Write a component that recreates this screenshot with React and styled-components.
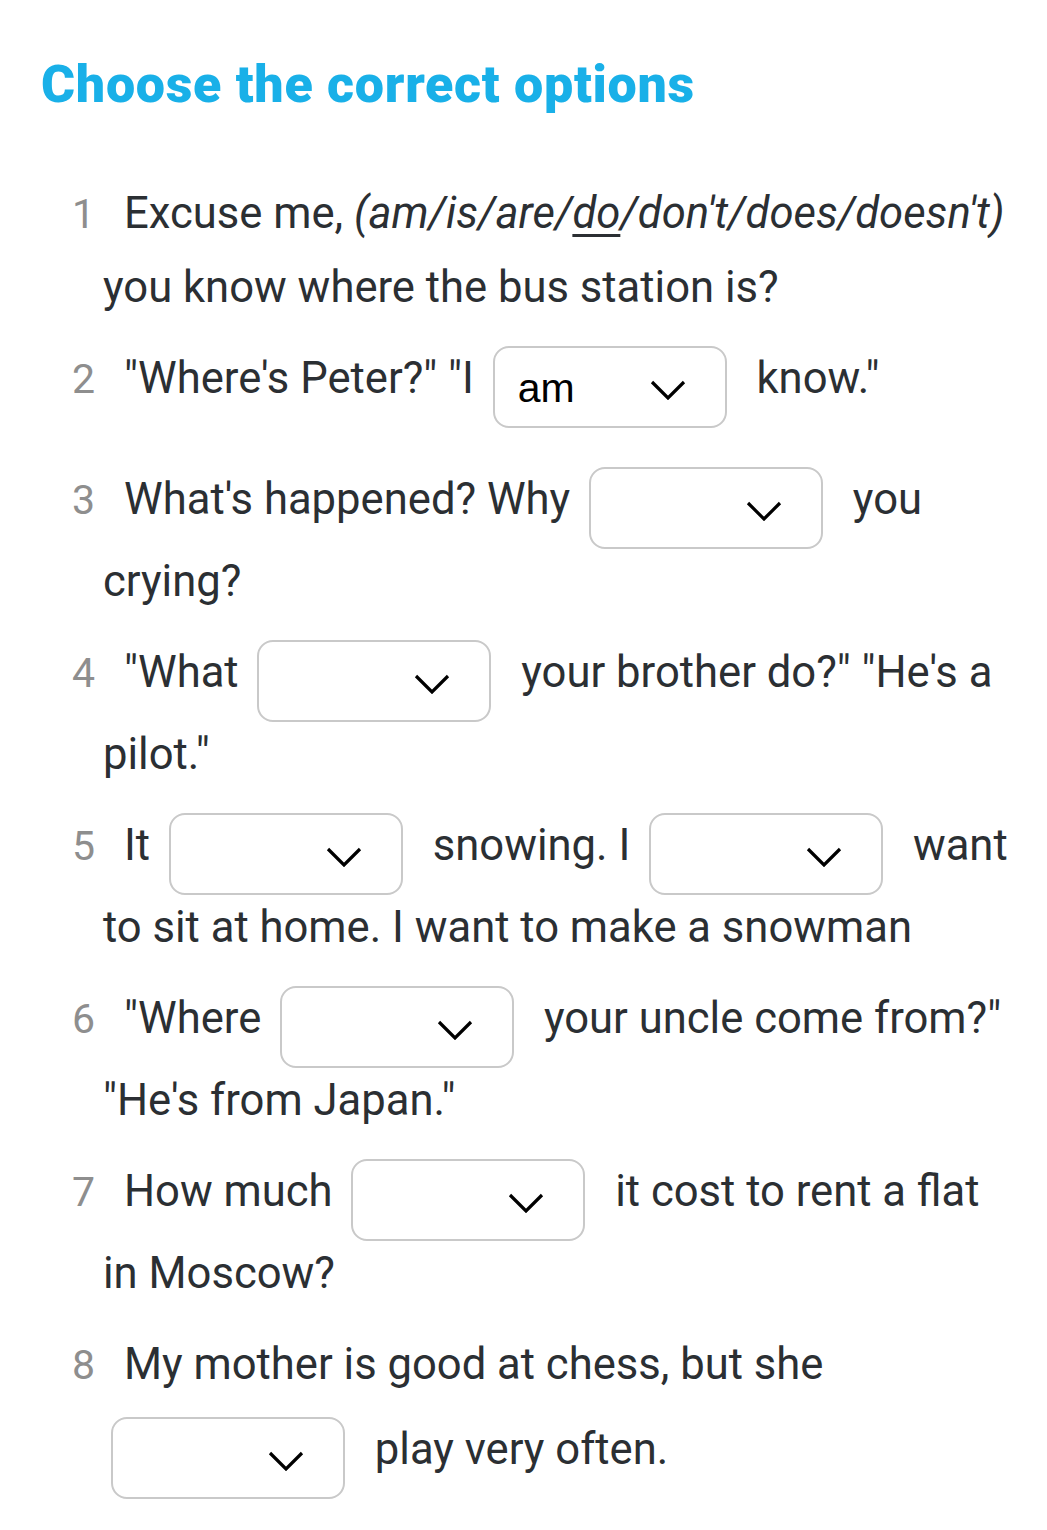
import React from 'react';
import styled, { createGlobalStyle } from 'styled-components';

const Global = createGlobalStyle`
  html, body { margin: 0; padding: 0; background: #ffffff; }
  body { font-family: Roboto, "Noto Sans", Arial, sans-serif; }
`;

const Page = styled.main`
  box-sizing: border-box;
  width: 1047px;
  min-height: 1530px;
  padding: 55px 35px 30px 39px;
`;

const Title = styled.h1`
  margin: 0 0 62px;
  padding-left: 2px;
  font-family: Roboto, "Noto Sans", sans-serif;
  font-weight: 900;
  font-size: 52px;
  line-height: 60px;
  color: #19b0e8;
  letter-spacing: 0.7px;
`;

const List = styled.ol`
  list-style: none;
  margin: 0;
  padding: 0 0 0 64px;
`;

const Item = styled.li`
  font-family: Roboto, "Noto Sans", sans-serif;
  font-size: 43.6px;
  line-height: 73px;
  color: #2b2f33;
  text-indent: -31px;
  margin-bottom: ${(p) => (p.$after ?? 7)}px;
`;

const Num = styled.span`
  display: inline-block;
  width: 20px;
  margin-right: 32px;
  text-indent: 0;
  text-align: right;
  color: #8e8e8e;
  font-size: 41px;
`;

const Options = styled.em`
  font-style: italic;
`;

const Marked = styled.span`
  text-decoration: underline;
  text-decoration-thickness: 3px;
  text-underline-offset: 6px;
`;

const SelectBox = styled.span`
  display: inline-block;
  box-sizing: border-box;
  width: 234px;
  height: 82px;
  margin: 15px 19px -4px 8px;
  vertical-align: -31px;
  overflow: hidden;
  text-indent: 0;
  border: 2px solid #c9c9c9;
  border-radius: 16px;
  background: #ffffff;
`;

const SelectInner = styled.span`
  display: flex;
  align-items: center;
  justify-content: space-between;
  height: 100%;
  padding: 0 39px 0 23px;
  box-sizing: border-box;
`;

const Value = styled.span`
  font-family: "Liberation Sans", Arial, sans-serif;
  font-size: 41px;
  line-height: 1;
  color: #000000;
  margin-top: 2px;
`;

const Chevron = styled.svg`
  display: block;
  flex: none;
  margin-top: 6px;
`;

function Select({ value = '' }) {
  return (
    <SelectBox role="combobox" aria-expanded="false">
      <SelectInner>
        <Value>{value}</Value>
        <Chevron width="36" height="20" viewBox="0 0 36 20" aria-hidden="true">
          <polyline points="2,2 18,18 34,2" fill="none" stroke="#000" strokeWidth="3.2" />
        </Chevron>
      </SelectInner>
    </SelectBox>
  );
}

export default function App() {
  return (
    <>
      <Global />
      <Page>
        <Title>Choose the correct options</Title>
        <List>
          <Item>
            <Num>1</Num>Excuse me, <Options>(am/is/are/<Marked>do</Marked>/don't/does/doesn't)</Options> you know where the bus station is?
          </Item>
          <Item $after={28}>
            <Num>2</Num>"Where's Peter?" "I <Select value="am" /> know."
          </Item>
          <Item>
            <Num>3</Num>What's happened? Why <Select /> you crying?
          </Item>
          <Item>
            <Num>4</Num>"What <Select /> your brother do?" "He's a pilot."
          </Item>
          <Item>
            <Num>5</Num>It <Select /> snowing. I <Select /> want to sit at home. I want to make a snowman
          </Item>
          <Item>
            <Num>6</Num>"Where <Select /> your uncle come from?" "He's from Japan."
          </Item>
          <Item $after={18}>
            <Num>7</Num>How much <Select /> it cost to rent a flat in Moscow?
          </Item>
          <Item>
            <Num>8</Num>My mother is good at chess, but she <Select /> play very often.
          </Item>
        </List>
      </Page>
    </>
  );
}
